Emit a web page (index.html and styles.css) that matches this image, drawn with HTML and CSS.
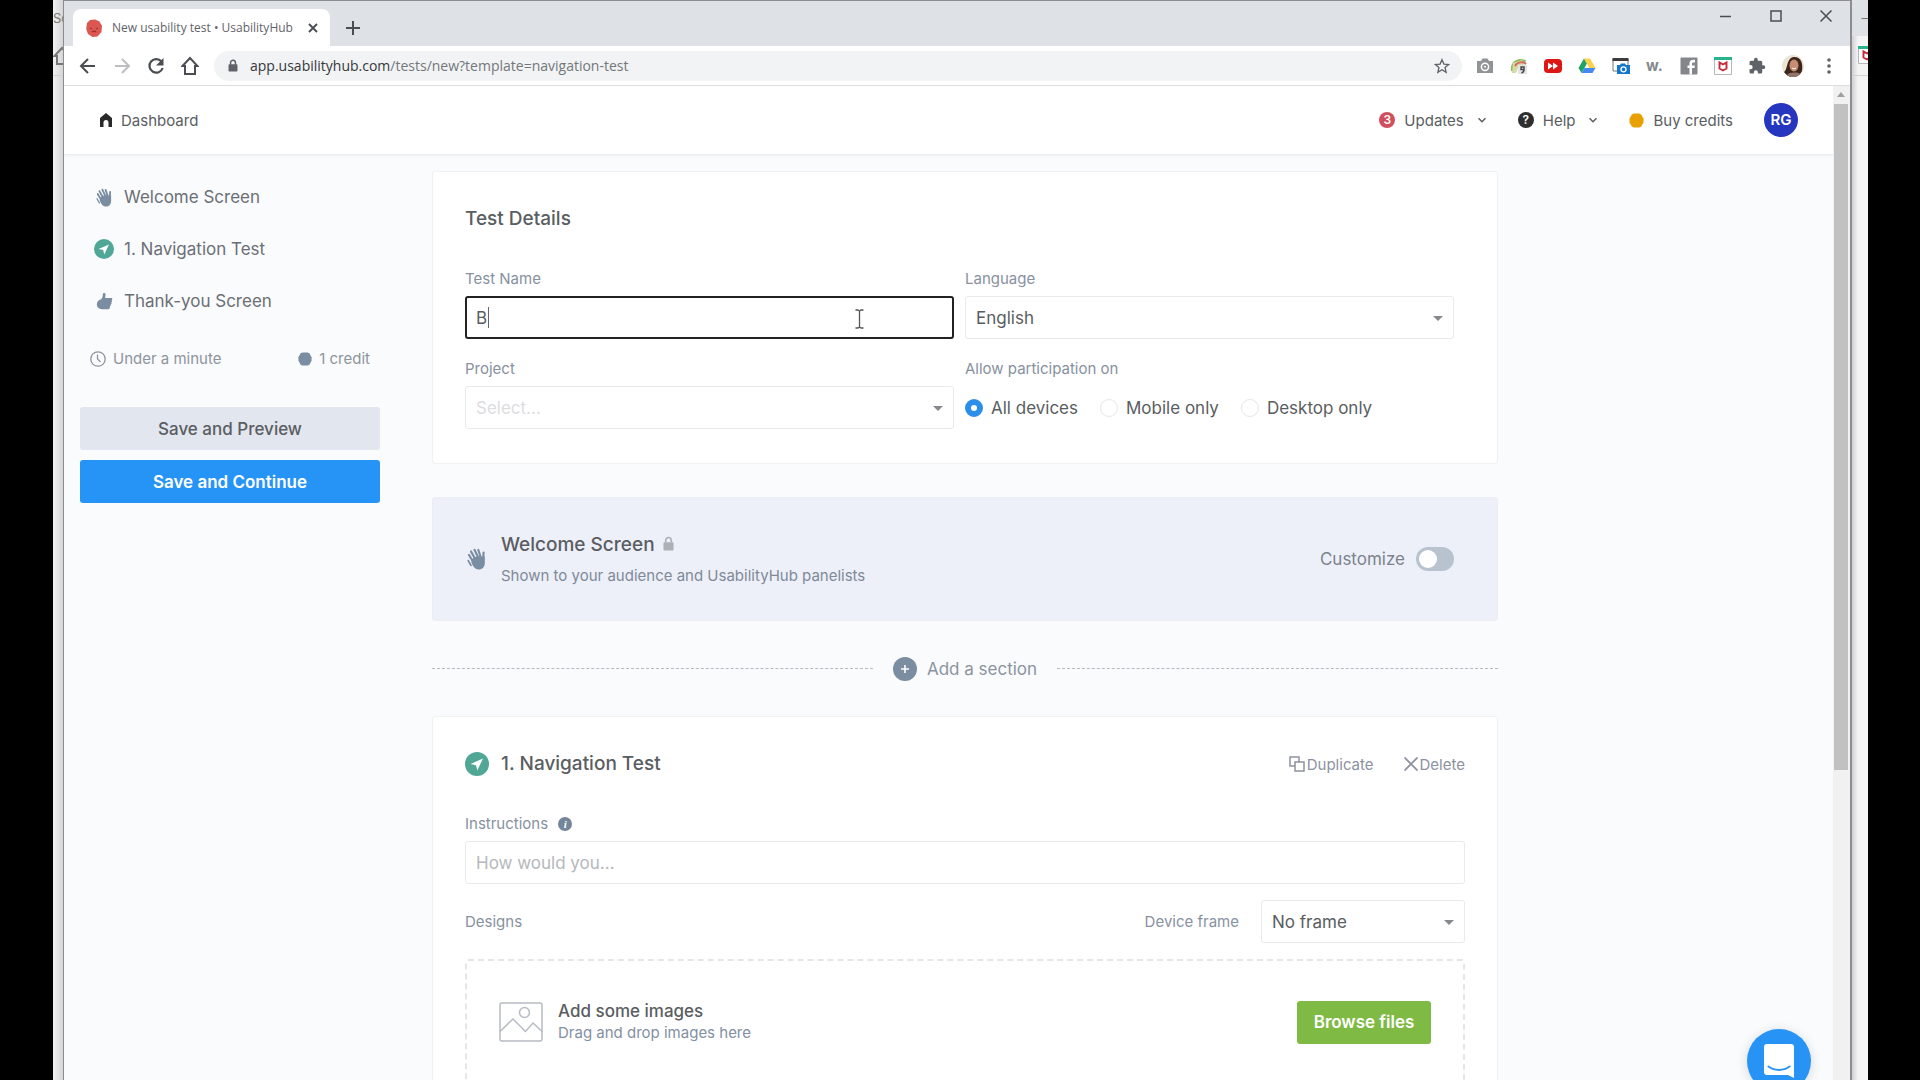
FILE: index.html
```html
<!DOCTYPE html>
<html lang="en">
<head>
    <meta charset="UTF-8">
    <meta name="viewport" content="width=device-width, initial-scale=1.0">
    <title>New usability test • UsabilityHub</title>
    <link rel="stylesheet" href="styles.css">
</head>
<body>
    <!-- shared icons -->
    <svg class="sprite" aria-hidden="true">
        <symbol id="icon-wave" viewBox="0 0 20 22">
            <path d="M4 3.5l4.5 8M7.500 1.800l4 8.500M11.300 2l2.700 8M2 7l4 6.500M16.600 4.500l-.6 8" fill="none" stroke="currentColor" stroke-width="2.200" stroke-linecap="round"/>
            <path d="M4.500 11.500L8 9l6-1 1.200 2L17.800 8v7c0 4-2.500 6.500-6 6.500-4 0-5.500-3-7.300-6.500z" fill="currentColor"/>
            <path d="M1.200 12.500L4 17.500" fill="none" stroke="currentColor" stroke-width="1.600" stroke-linecap="round"/>
        </symbol>
        <symbol id="icon-nav" viewBox="0 0 24 24">
            <circle cx="12" cy="12" r="12" fill="#50a795"/>
            <path d="M18 6.500L5.500 12l5.500 1.300 1.300 5.200z" fill="#fff"/>
        </symbol>
        <symbol id="icon-thumb" viewBox="0 0 20 20">
            <path d="M9.500 0c1.500 0 2 1 1.700 2.400L10.800 6H18c1.400 0 1.700 2 .4 2.600.7.700.5 2.200-.4 2.500.5.800.2 2.100-.7 2.400.3.900-.1 1.900-.9 2.100.1 2.200-.6 3.400-2.200 3.400H7C3 19 1 16.500 1 13.200 1 10 3 8 6 7.300 7.500 5.500 8 4 8 2 8 .8 8.500 0 9.500 0z" fill="currentColor"/>
        </symbol>
        <symbol id="icon-chevron" viewBox="0 0 10 10">
            <path d="M1.500 3.200L5 6.700l3.500-3.500" fill="none" stroke="currentColor" stroke-width="1.500"/>
        </symbol>
        <symbol id="icon-hexagon" viewBox="0 0 16 16">
            <path d="M5 .5h6l2 1L15.500 6v4L13 14.500l-2 1H5l-2-1L.5 10V6L3 1.500z" fill="currentColor"/>
        </symbol>
        <symbol id="icon-lock" viewBox="0 0 12 16">
            <path d="M3 7V4.500a3 3 0 0 1 6 0V7" fill="none" stroke="currentColor" stroke-width="1.800"/>
            <rect x="0.500" y="6.500" width="11" height="9" rx="1" fill="currentColor"/>
        </symbol>
        <symbol id="icon-shield" viewBox="0 0 18 18">
            <path d="M.5.500h17v17H.5z" fill="#fff" stroke="#b5b7b9"/>
            <path d="M0 0h18v3H0z" fill="#26b58a"/>
            <path d="M5.500 5.500v6L9 13.500l3.500-2v-6L9 7.500z" fill="none" stroke="#c62b3a" stroke-width="1.900"/>
        </symbol>
        <symbol id="icon-house" viewBox="0 0 18 20">
            <path d="M1.500 10L9 2l7.500 8H14v8H4v-8z" fill="none" stroke="currentColor" stroke-width="2"/>
        </symbol>
    </svg>

    <div class="desktop">
        <!-- window behind, left edge -->
        <div class="behind behind-left">
            <div class="behind-tabs">Sc</div>
            <div class="behind-bar"><svg width="18" height="20"><use href="#icon-house"/></svg></div>
        </div>

        <div class="browser">
            <div class="tab-strip">
                <div class="tab">
                    <svg class="favicon" width="16" height="18" viewBox="0 0 16 18">
                        <path d="M4 1l5-.5 4.500 2L16 7l-.5 6-4 4.500-5 .5L2 15 .2 10 1 4z" fill="#dc5652"/>
                        <path d="M4 9l2 .8M10 9.800l2-.8M6 13c1.500-1 3-1 4 0" fill="none" stroke="#96322f" stroke-width="1.200"/>
                    </svg>
                    <span class="tab-title">New usability test • UsabilityHub</span>
                    <button class="icon-button" aria-label="Close tab"><svg width="10" height="10" viewBox="0 0 10 10"><path d="M1 1l8 8M9 1L1 9" stroke="currentColor" stroke-width="1.900"/></svg></button>
                </div>
                <button class="icon-button new-tab" aria-label="New tab"><svg width="14" height="14" viewBox="0 0 14 14"><path d="M7 0v14M0 7h14" stroke="currentColor" stroke-width="2"/></svg></button>
                <div class="window-buttons">
                    <button class="icon-button" aria-label="Minimize"><svg width="12" height="12" viewBox="0 0 12 12"><path d="M0 6.500h11" stroke="currentColor" stroke-width="1.500"/></svg></button>
                    <button class="icon-button" aria-label="Maximize"><svg width="12" height="12" viewBox="0 0 12 12"><path d="M1 1h10v10H1z" fill="none" stroke="currentColor" stroke-width="1.500"/></svg></button>
                    <button class="icon-button" aria-label="Close"><svg width="12" height="12" viewBox="0 0 12 12"><path d="M.5.500l11 11M11.500.500l-11 11" stroke="currentColor" stroke-width="1.500"/></svg></button>
                </div>
            </div>

            <div class="toolbar">
                <div class="toolbar-nav">
                    <button class="icon-button" aria-label="Back"><svg width="18" height="18" viewBox="0 0 18 18"><path d="M16 9H2.500M9 2L2 9l7 7" fill="none" stroke="currentColor" stroke-width="2"/></svg></button>
                    <button class="icon-button disabled" aria-label="Forward"><svg width="18" height="18" viewBox="0 0 18 18"><path d="M2 9h13.500M9 2l7 7-7 7" fill="none" stroke="currentColor" stroke-width="2"/></svg></button>
                    <button class="icon-button" aria-label="Reload"><svg width="18" height="18" viewBox="0 0 18 18"><path d="M14.500 4.500A6.800 6.800 0 1 0 15.700 11" fill="none" stroke="currentColor" stroke-width="2.200"/><path d="M16.500 1v7.500H9z" fill="currentColor"/></svg></button>
                    <button class="icon-button" aria-label="Home"><svg width="18" height="20"><use href="#icon-house"/></svg></button>
                </div>
                <div class="address">
                    <svg class="address-lock" width="10" height="13"><use href="#icon-lock"/></svg>
                    <div class="url"><span>app.usabilityhub.com</span>/tests/new?template=navigation-test</div>
                    <svg width="16" height="16" viewBox="0 0 24 24"><path d="M12 2.500l2.900 6.600 7.100.6-5.400 4.700 1.600 7L12 17.700l-6.200 3.700 1.600-7L2 9.700l7.100-.6z" fill="none" stroke="#5f6368" stroke-width="2"/></svg>
                </div>
                <div class="extensions">
                    <svg viewBox="0 0 18 18"><path d="M1 4h4l1.500-2.500h5L13 4h4v12H1z" fill="#919396"/><circle cx="9" cy="9.800" r="3.600" fill="none" stroke="#fff" stroke-width="1.500"/><circle cx="9" cy="9.800" r="1" fill="#fff"/></svg>
                    <svg viewBox="0 0 18 18"><path d="M1 14C0 7 4 2 11 2l5 1-1 3H9l-4 9z" fill="#8bbb58"/><path d="M3 6l9-3 4 4-7 2-3 7H2z" fill="#d8d9a8"/><path d="M5 9c2-4 8-5 11-2" fill="none" stroke="#d46d60" stroke-width="2"/><path d="M8 8h9v9H8z" fill="#e4e4e4"/><path d="M14 13.500V10h-3v2.500h3c0 2-1 3-2.500 3.500" fill="none" stroke="#444" stroke-width="1.400"/></svg>
                    <svg viewBox="0 0 18 18"><rect y="2" width="18" height="14" rx="4" fill="#dd1714"/><path d="M4 5.500L9 9l-5 3.500zM9 5.500L14 9l-5 3.500z" fill="#fff"/></svg>
                    <svg viewBox="0 0 18 18"><path d="M6 1.500L.5 11l3 5L9 6.500z" fill="#1da462"/><path d="M6 1.500h6L17.500 11h-6z" fill="#ffcf48"/><path d="M6.500 11h11l-3 5h-11z" fill="#4688f4"/></svg>
                    <svg viewBox="0 0 18 18"><path d="M1 2h15v12H1z" fill="#fff" stroke="#777"/><path d="M.5 1h16v3H.5z" fill="#3c3c3c"/><path d="M5 8h3l1-1.500h4L14 8h4v9H5z" fill="#1677c8"/><circle cx="11.500" cy="12.300" r="2.500" fill="none" stroke="#fff" stroke-width="1.300"/></svg>
                    <span class="w-extension">w.</span>
                    <svg viewBox="0 0 18 18"><rect x="0.500" y="0.500" width="17" height="17" rx="1" fill="#85868a"/><path d="M12 17.500V11h2.500l.4-2.500H12V7c0-1 .4-1.500 1.500-1.500h1.500V3c-3.500-.6-5.500.6-5.500 3.500v2h-2V11h2v6.500z" fill="#fff"/></svg>
                    <svg><use href="#icon-shield"/></svg>
                    <svg viewBox="0 0 24 24"><path d="M20.500 11H19V7a2 2 0 0 0-2-2h-4V3.500a2.500 2.500 0 0 0-5 0V5H4a2 2 0 0 0-2 2v3.800h1.500a2.700 2.700 0 0 1 0 5.400H2V20a2 2 0 0 0 2 2h3.800v-1.500a2.700 2.700 0 0 1 5.400 0V22H17a2 2 0 0 0 2-2v-4h1.500a2.500 2.500 0 0 0 0-5z" fill="#5f6368"/></svg>
                    <svg class="profile" viewBox="0 0 22 22"><circle cx="11" cy="11" r="11" fill="#eee4d3"/><path d="M2 17C6 15 4 3 12 2c8 0 9 8 8 14-2 4-5 6-9 6-4 0-7-2-9-5z" fill="#3b251d"/><ellipse cx="12" cy="10.500" rx="4.500" ry="6" fill="#c88d70"/><path d="M5 20c2-3 11-3 13-1-4 4-9 4-13 1z" fill="#927567"/><path d="M10 13c1 1 3 1 4 0" stroke="#fff" fill="none"/></svg>
                    <svg viewBox="0 0 18 18"><g fill="#5f6368"><circle cx="9" cy="3" r="1.800"/><circle cx="9" cy="9" r="1.800"/><circle cx="9" cy="15" r="1.800"/></g></svg>
                </div>
            </div>

            <div class="viewport">
                <div class="page">
                    <header class="header">
                        <a class="nav-link dashboard" href="#">
                            <svg width="12" height="14" viewBox="0 0 12 14"><path d="M6 0l6 5v9H8.500V9.500a2.500 2.500 0 0 0-5 0V14H0V5z" fill="#292929"/></svg>
                            Dashboard
                        </a>
                        <nav class="header-nav">
                            <a class="nav-link" href="#"><span class="count">3</span>Updates<svg class="chevron" width="10" height="10"><use href="#icon-chevron"/></svg></a>
                            <a class="nav-link" href="#"><span class="count help">?</span>Help<svg class="chevron" width="10" height="10"><use href="#icon-chevron"/></svg></a>
                            <a class="nav-link" href="#"><svg class="gold" width="15" height="15"><use href="#icon-hexagon"/></svg>Buy credits</a>
                            <a class="avatar" href="#">RG</a>
                        </nav>
                    </header>

                    <div class="content">
                        <aside class="sidebar">
                            <nav class="steps">
                                <a href="#welcome"><svg width="17" height="19"><use href="#icon-wave"/></svg>Welcome Screen</a>
                                <a href="#navigation"><svg width="20" height="20"><use href="#icon-nav"/></svg>1. Navigation Test</a>
                                <a href="#thanks"><svg width="17" height="17"><use href="#icon-thumb"/></svg>Thank-you Screen</a>
                            </nav>
                            <div class="meta">
                                <span><svg width="16" height="16" viewBox="0 0 16 16"><circle cx="8" cy="8" r="7.200" fill="none" stroke="currentColor" stroke-width="1.300"/><path d="M7.500 3.500V8l3 3" fill="none" stroke="currentColor" stroke-width="1.300"/></svg>Under a minute</span>
                                <span><svg width="14" height="14" class="slate"><use href="#icon-hexagon"/></svg>1 credit</span>
                            </div>
                            <button class="button preview">Save and Preview</button>
                            <button class="button continue">Save and Continue</button>
                        </aside>

                        <main class="main">
                            <section class="card details">
                                <h2>Test Details</h2>
                                <div class="form-grid">
                                    <div class="field">
                                        <label for="test-name">Test Name</label>
                                        <div class="control">
                                            <input class="box active" id="test-name" type="text" value="B">
                                            <span class="text-caret"></span>
                                            <svg class="ibeam" width="9" height="20" viewBox="0 0 9 20"><path d="M.5 1H3l1.500 1L6 1h2.500M.5 19H3l1.500-1L6 19h2.500M4.500 2v16" fill="none" stroke="#555" stroke-width="1.300"/></svg>
                                        </div>
                                    </div>
                                    <div class="field">
                                        <label for="language">Language</label>
                                        <div class="control select">
                                            <select class="box" id="language"><option>English</option></select>
                                        </div>
                                    </div>
                                    <div class="field">
                                        <label for="project">Project</label>
                                        <div class="control select">
                                            <select class="box empty" id="project"><option>Select...</option></select>
                                        </div>
                                    </div>
                                    <fieldset class="field">
                                        <legend>Allow participation on</legend>
                                        <div class="radios">
                                            <label><input type="radio" name="devices" checked>All devices</label>
                                            <label><input type="radio" name="devices">Mobile only</label>
                                            <label><input type="radio" name="devices">Desktop only</label>
                                        </div>
                                    </fieldset>
                                </div>
                            </section>

                            <section class="card welcome" id="welcome">
                                <svg class="slate" width="24" height="22"><use href="#icon-wave"/></svg>
                                <div class="welcome-text">
                                    <h2>Welcome Screen <svg width="11" height="15"><use href="#icon-lock"/></svg></h2>
                                    <p>Shown to your audience and UsabilityHub panelists</p>
                                </div>
                                <label class="customize">Customize<input type="checkbox"></label>
                            </section>

                            <div class="add-row">
                                <button class="add-section">
                                    <svg width="24" height="24" viewBox="0 0 24 24"><circle cx="12" cy="12" r="12" fill="#7a8da1"/><path d="M12 8v8M8 12h8" stroke="#fff" stroke-width="1.600"/></svg>
                                    Add a section
                                </button>
                            </div>

                            <section class="card test" id="navigation">
                                <div class="test-head">
                                    <svg width="24" height="24"><use href="#icon-nav"/></svg>
                                    <h2>1. Navigation Test</h2>
                                    <button class="action"><svg width="16" height="16" viewBox="0 0 16 16"><path d="M6 10H1V1h9v5M6 6h9v9H6z" fill="none" stroke="currentColor" stroke-width="1.500"/></svg>Duplicate</button>
                                    <button class="action"><svg width="14" height="14" viewBox="0 0 14 14"><path d="M.5.500l13 13M13.500.500l-13 13" stroke="currentColor" stroke-width="1.800"/></svg>Delete</button>
                                </div>
                                <div class="field">
                                    <label for="instructions">Instructions <span class="info">i</span></label>
                                    <input class="box" id="instructions" type="text" placeholder="How would you...">
                                </div>
                                <div class="designs">
                                    <h3>Designs</h3>
                                    <label for="frame">Device frame</label>
                                    <div class="control select frame">
                                        <select class="box" id="frame"><option>No frame</option></select>
                                    </div>
                                </div>
                                <div class="dropzone">
                                    <svg width="44" height="40" viewBox="0 0 44 40"><g fill="none" stroke="#b7bbc3" stroke-width="1.500"><rect x="1" y="1" width="42" height="38" rx="2"/><ellipse cx="25.500" cy="10.500" rx="5" ry="5"/><path d="M1 29.500L14 17l12.500 12.500L34 21l9 8.500"/></g></svg>
                                    <div class="drop-text">
                                        <strong>Add some images</strong>
                                        <p>Drag and drop images here</p>
                                    </div>
                                    <button class="button browse">Browse files</button>
                                </div>
                            </section>
                        </main>
                    </div>
                </div>
                <div class="scrollbar">
                    <span class="scroll-arrow"></span>
                    <span class="scroll-thumb"></span>
                </div>
                <button class="chat" aria-label="Open chat">
                    <svg width="30" height="34" viewBox="0 0 30 34"><path d="M3 0h24a3 3 0 0 1 3 3v31l-6-3H3a3 3 0 0 1-3-3V3a3 3 0 0 1 3-3z" fill="#fff"/><path d="M4.500 22.500c6 4.500 15 4.500 21 0" fill="none" stroke="#2693f5" stroke-width="2" stroke-linecap="round"/></svg>
                </button>
            </div>
        </div>

        <!-- window behind, right edge -->
        <div class="behind behind-right">
            <div class="behind-tabs">–</div>
            <div class="behind-bar"><svg width="18" height="18"><use href="#icon-shield"/></svg></div>
        </div>
    </div>
</body>
</html>
```
FILE: styles.css
```css
* {
    margin: 0;
    padding: 0;
    box-sizing: border-box;
}

body {
    background-color: #000;
    font-family: Inter, "Liberation Sans", sans-serif;
    font-size: 17px;
    color: #5a5d61;
}

button, input, select {
    font: inherit;
    color: inherit;
}

button {
    border: none;
    background: none;
    cursor: pointer;
}

a {
    color: inherit;
    text-decoration: none;
}

svg {
    flex-shrink: 0;
}

h2 {
    font-size: 19px;
    line-height: 24px;
    font-weight: 500;
}

h3, .field label, legend, .designs label {
    font-size: 15px;
    line-height: 20px;
    font-weight: 400;
    color: #87919f;
}

.sprite {
    display: none;
}

.slate {
    color: #7a8da1;
}

.desktop {
    display: flex;
    height: 100vh;
    margin: 0 52px 0 53px;
    overflow: hidden;
}

/* background windows */
.behind {
    overflow: hidden;
    background-color: #ececee;
    color: #777;
    font-size: 13px;
}

.behind-left {
    width: 10px;
    background: linear-gradient(to right, #f2f2f2, #d5d5d7);
}

.behind-right {
    width: 16px;
    background: linear-gradient(to right, #d0d0d2, #f4f4f5 6px);
}

.behind-tabs {
    height: 36px;
    line-height: 36px;
}

.behind-right .behind-tabs {
    background-color: #dee1e6;
    text-align: right;
}

.behind-bar {
    height: 40px;
    padding-top: 10px;
    border-bottom: 1px solid #d2d2d4;
}

.behind-right .behind-bar {
    padding-left: 6px;
}

/* browser */
.browser {
    flex: 1;
    min-width: 0;
    display: flex;
    flex-direction: column;
    background-color: #fff;
    border: 1px solid #8b8d91;
    border-bottom: none;
    border-right-width: 2px;
}

.icon-button {
    display: flex;
    align-items: center;
    justify-content: center;
    color: #4a4d51;
}

.icon-button.disabled {
    color: #bcbec1;
}

.tab-strip {
    display: flex;
    align-items: flex-end;
    height: 45px;
    padding-left: 9px;
    background-color: #dee1e6;
}

.tab {
    display: flex;
    align-items: center;
    gap: 10px;
    width: 257px;
    height: 37px;
    padding: 0 12px 0 13px;
    border-radius: 8px 8px 0 0;
    background-color: #fff;
}

.tab-title {
    flex: 1;
    white-space: nowrap;
    font-family: "Open Sans", sans-serif;
    font-size: 12px;
    color: #5f6368;
}

.new-tab {
    width: 46px;
    height: 37px;
}

.window-buttons {
    display: flex;
    gap: 38px;
    align-self: flex-start;
    margin-left: auto;
    padding: 9px 18px;
}

.toolbar {
    display: flex;
    align-items: center;
    height: 40px;
    padding: 0 12px 0 15px;
    border-bottom: 1px solid #dcdddf;
}

.toolbar-nav {
    display: flex;
    align-items: center;
    gap: 16px;
    margin-right: 15px;
}

.address {
    flex: 1;
    display: flex;
    align-items: center;
    height: 30px;
    margin-right: 14px;
    padding: 0 12px 0 14px;
    border-radius: 15px;
    background-color: #f1f3f4;
}

.address-lock {
    margin-right: 12px;
    color: #5f6368;
}

.url {
    flex: 1;
    font-family: "Open Sans", sans-serif;
    font-size: 14px;
    color: #74777b;
}

.url span {
    color: #35383c;
}

.extensions {
    display: flex;
    align-items: center;
    gap: 16px;
}

.extensions svg {
    width: 18px;
    height: 18px;
}

.extensions .profile {
    width: 22px;
    height: 22px;
}

.w-extension {
    width: 18px;
    line-height: 18px;
    font-size: 15px;
    font-weight: 700;
    color: #85898d;
}

/* page */
.viewport {
    position: relative;
    flex: 1;
    min-height: 0;
    display: flex;
}

.page {
    flex: 1;
    min-width: 0;
    overflow: hidden;
    background-color: #fafbfd;
}

.scrollbar {
    width: 17px;
    padding: 0 2px 0 1px;
    background-color: #f1f1f1;
}

.scroll-arrow {
    display: block;
    width: 8px;
    margin: 6px auto 7px;
    border: 4px solid transparent;
    border-top: none;
    border-bottom: 5px solid #a0a0a0;
}

.scroll-thumb {
    display: block;
    height: 67%;
    background-color: #c1c1c1;
}

.header {
    display: flex;
    justify-content: space-between;
    align-items: center;
    height: 69px;
    padding: 0 35px 0 36px;
    background-color: #fff;
    border-bottom: 1px solid #ebecee;
    box-shadow: 0 1px 3px rgba(0, 0, 0, 0.05);
    font-size: 15px;
}

.header-nav {
    display: flex;
    align-items: center;
}

.nav-link {
    display: flex;
    align-items: center;
    gap: 9px;
    margin-right: 31px;
}

.nav-link .chevron {
    margin-left: 4px;
}

.count {
    width: 16px;
    height: 16px;
    border-radius: 50%;
    background-color: #d14f5d;
    color: #fff;
    font-size: 12px;
    line-height: 16px;
    font-weight: 600;
    text-align: center;
}

.count.help {
    background-color: #2e2e2e;
}

.gold {
    color: #e8a100;
}

.avatar {
    width: 34px;
    height: 34px;
    border-radius: 50%;
    background-color: #2736bf;
    color: #fff;
    font-size: 15px;
    line-height: 34px;
    font-weight: 600;
    text-align: center;
}

.content {
    display: grid;
    grid-template-columns: 300px minmax(0, 1066px);
    gap: 52px;
    padding: 16px 16px 0;
}

.steps {
    padding: 0 14px;
}

.steps a {
    display: grid;
    grid-template-columns: 20px 1fr;
    align-items: center;
    gap: 10px;
    height: 52px;
    color: #6b6f75;
}

.steps svg {
    justify-self: center;
    color: #7a8da1;
}

.meta {
    display: flex;
    justify-content: space-between;
    margin: 22px 10px 38px;
    font-size: 15px;
    line-height: 20px;
    color: #8e949d;
}

.meta span {
    display: flex;
    align-items: center;
    gap: 7px;
}

.button {
    height: 43px;
    border-radius: 3px;
    font-weight: 600;
}

.preview {
    width: 100%;
    margin-bottom: 10px;
    background-color: #e2e6ef;
    font-weight: 500;
}

.continue {
    width: 100%;
    background-color: #2693f6;
    color: #fff;
}

.card {
    padding: 34px 32px 32px;
    border: 1px solid #f0f1f3;
    border-radius: 3px;
    background-color: #fff;
}

.details {
    padding: 35px 43px 34px 32px;
}

.form-grid {
    display: grid;
    grid-template-columns: 1fr 1fr;
    gap: 20px 11px;
    margin-top: 38px;
}

.field {
    min-width: 0;
    border: none;
}

.field > label, legend {
    display: block;
    margin-bottom: 7px;
}

.control {
    position: relative;
}

.box {
    display: block;
    width: 100%;
    height: 43px;
    padding: 0 10px;
    border: 1px solid #e9eaec;
    border-radius: 3px;
    background-color: #fff;
    appearance: none;
    outline: none;
}

.box.active {
    padding: 0 9px;
    border: 2px solid #222;
}

.box.empty {
    color: #dcdddf;
}

.box::placeholder {
    color: #b5b8bc;
    opacity: 1;
}

.select::after {
    content: "";
    position: absolute;
    top: 20px;
    right: 11px;
    border: 5px solid transparent;
    border-top-color: #85888c;
    border-bottom: none;
    pointer-events: none;
}

.text-caret {
    position: absolute;
    top: 11px;
    left: 23px;
    width: 1px;
    height: 21px;
    background-color: #666;
}

.ibeam {
    position: absolute;
    top: 13px;
    right: 90px;
}

.radios {
    display: flex;
    align-items: center;
    gap: 22px;
    height: 43px;
}

.field .radios label {
    display: flex;
    align-items: center;
    gap: 8px;
    font-size: 17px;
    color: #5a5d61;
}

.radios input {
    width: 18px;
    height: 18px;
    border: 1px solid #e4e6ea;
    border-radius: 50%;
    background-color: #fff;
    appearance: none;
}

.radios input:checked {
    border: 6px solid #2b8fea;
}

.welcome {
    display: flex;
    align-items: center;
    gap: 12px;
    height: 124px;
    margin-top: 33px;
    padding: 0 43px 0 32px;
    background-color: #edf0f9;
    border-color: #eaedf3;
}

.welcome-text {
    flex: 1;
}

.welcome h2 svg {
    margin-left: 3px;
    color: #adb0b6;
}

.welcome p {
    margin-top: 9px;
    font-size: 15px;
    line-height: 20px;
    color: #7f8a98;
}

.customize {
    display: flex;
    align-items: center;
    gap: 11px;
    color: #7c838d;
}

.customize input {
    width: 38px;
    height: 24px;
    padding: 3px;
    border-radius: 12px;
    background-color: #b9c3cf;
    appearance: none;
}

.customize input::before {
    content: "";
    display: block;
    width: 18px;
    height: 18px;
    border-radius: 50%;
    background-color: #fff;
}

.add-row {
    display: flex;
    align-items: center;
    gap: 20px;
    height: 95px;
}

.add-row::before, .add-row::after {
    content: "";
    flex: 1;
    border-top: 1px dashed #b5b9c0;
}

.add-section {
    display: flex;
    align-items: center;
    gap: 10px;
    color: #8b939f;
}

.test-head {
    display: flex;
    align-items: center;
    gap: 12px;
    height: 26px;
}

.test-head h2 {
    flex: 1;
}

.action {
    display: flex;
    align-items: center;
    gap: 2px;
    margin-left: 18px;
    font-size: 15px;
    color: #8c929f;
}

.test .field {
    margin-top: 37px;
}

.info {
    display: inline-block;
    width: 14px;
    height: 14px;
    margin-left: 6px;
    border-radius: 50%;
    background-color: #74869a;
    color: #fff;
    font: italic 700 11px/14px "Liberation Serif", serif;
    text-align: center;
    vertical-align: 1px;
}

.designs {
    display: flex;
    align-items: center;
    margin: 16px 0;
}

.designs h3 {
    flex: 1;
}

.frame {
    width: 204px;
    margin-left: 22px;
}

.dropzone {
    display: flex;
    align-items: center;
    gap: 15px;
    height: 160px;
    padding: 0 32px 34px;
    border: 2px dashed #e5e6e9;
    border-radius: 3px;
}

.drop-text {
    flex: 1;
}

.drop-text strong {
    display: block;
    line-height: 22px;
    font-weight: 500;
}

.drop-text p {
    font-size: 15px;
    line-height: 22px;
    color: #8290a4;
}

.browse {
    width: 134px;
    background-color: #7fba45;
    color: #fff;
}

.chat {
    position: absolute;
    right: 39px;
    bottom: -13px;
    display: flex;
    align-items: center;
    justify-content: center;
    width: 64px;
    height: 64px;
    border-radius: 50%;
    background-color: #2693f5;
    box-shadow: 0 2px 12px rgba(0, 0, 0, 0.15);
}
```
